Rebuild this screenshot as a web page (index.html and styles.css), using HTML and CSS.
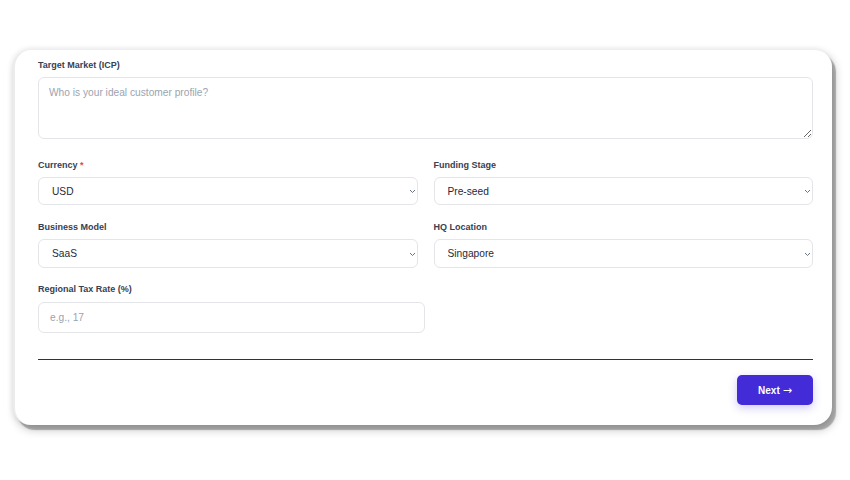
FILE: index.html
```html
<!DOCTYPE html>
<html>
<head>
<meta charset="utf-8">
<link rel="stylesheet" href="styles.css">
</head>
<body>
<div class="card">
  <div class="field first">
    <label class="label">Target Market (ICP)</label>
    <textarea class="textarea" placeholder="Who is your ideal customer profile?"></textarea>
  </div>
  <div class="row">
    <div class="field">
      <label class="label">Currency <span class="req">*</span></label>
      <div class="select-wrap">
        <select class="select"><option>USD</option></select>
        <svg class="chev" width="7" height="5" viewBox="0 0 7 5"><path d="M1 1l2.5 2.5L6 1" fill="none" stroke="#6b7280" stroke-width="1"/></svg>
      </div>
    </div>
    <div class="field">
      <label class="label">Funding Stage</label>
      <div class="select-wrap">
        <select class="select"><option>Pre-seed</option></select>
        <svg class="chev" width="7" height="5" viewBox="0 0 7 5"><path d="M1 1l2.5 2.5L6 1" fill="none" stroke="#6b7280" stroke-width="1"/></svg>
      </div>
    </div>
  </div>
  <div class="row row2">
    <div class="field">
      <label class="label">Business Model</label>
      <div class="select-wrap">
        <select class="select tall"><option>SaaS</option></select>
        <svg class="chev" width="7" height="5" viewBox="0 0 7 5"><path d="M1 1l2.5 2.5L6 1" fill="none" stroke="#6b7280" stroke-width="1"/></svg>
      </div>
    </div>
    <div class="field">
      <label class="label">HQ Location</label>
      <div class="select-wrap">
        <select class="select tall"><option>Singapore</option></select>
        <svg class="chev" width="7" height="5" viewBox="0 0 7 5"><path d="M1 1l2.5 2.5L6 1" fill="none" stroke="#6b7280" stroke-width="1"/></svg>
      </div>
    </div>
  </div>
  <div class="field tax">
    <label class="label">Regional Tax Rate (%)</label>
    <input class="input" type="text" placeholder="e.g., 17">
  </div>
  <div class="divider"></div>
  <div class="actions">
    <button class="btn">Next <span class="arrow">→</span></button>
  </div>
</div>
</body>
</html>
```
FILE: styles.css
```css
* { box-sizing: border-box; }
html { margin: 0; padding: 0; background: #ffffff; height: 100%; }
body {
  margin: 0;
  min-height: 480px;
  font-family: "Liberation Sans", Arial, sans-serif;
  padding: 49px 0 40px 13px;
  background: #ffffff;
}
.card {
  width: 819px;
  height: 376px;
  background: #fff;
  border-radius: 18px;
  border-left: 2px solid #ececec;
  border-top: 1px solid #efefef;
  box-shadow: 4px 5px 1px rgba(0,0,0,0.27), 3px 5px 10px rgba(0,0,0,0.22), -1px 0 6px rgba(0,0,0,0.08);
  padding: 9px 19px 0 23px;
}
.field { display: flex; flex-direction: column; }
.label {
  font-size: 9px;
  line-height: 12px;
  font-weight: bold;
  color: #374151;
  margin-bottom: 6px;
}
.req { color: #ef4444; }
.textarea {
  height: 62px;
  width: 100%;
  border: 1px solid #e3e5e8;
  border-radius: 6px;
  padding: 9px 10px;
  font-family: "Liberation Sans", Arial, sans-serif;
  font-size: 10.2px;
  color: #111827;
  resize: vertical;
  outline: none;
}
.textarea::placeholder, .input::placeholder { color: #9ca3af; }
.row {
  display: grid;
  grid-template-columns: 1fr 1fr;
  column-gap: 16px;
  margin-top: 20px;
}
.row2 { margin-top: 16px; }
.select-wrap { position: relative; }
.select {
  appearance: none;
  -webkit-appearance: none;
  width: 100%;
  height: 28px;
  border: 1px solid #e3e5e8;
  border-radius: 6px;
  background: #fff;
  padding: 0 13px;
  font-family: "Liberation Sans", Arial, sans-serif;
  font-size: 10.2px;
  color: #1f2937;
  outline: none;
}
.select.tall { height: 29px; }
.chev {
  position: absolute;
  right: 2px;
  top: 50%;
  margin-top: -2px;
}
.tax { margin-top: 15px; width: 387px; }
.tax .label { margin-bottom: 7px; }
.input {
  height: 31px;
  width: 100%;
  border: 1px solid #e3e5e8;
  border-radius: 6px;
  padding: 0 11px;
  font-family: "Liberation Sans", Arial, sans-serif;
  font-size: 10.2px;
  color: #1f2937;
  outline: none;
}
.divider {
  margin-top: 26px;
  height: 1px;
  background: #333;
}
.actions {
  display: flex;
  justify-content: flex-end;
  margin-top: 15px;
}
.btn {
  width: 76px;
  height: 30px;
  border: none;
  border-radius: 5px;
  background: #432cd8;
  color: #fff;
  font-family: "Liberation Sans", Arial, sans-serif;
  font-size: 10px;
  font-weight: bold;
  box-shadow: 0 3px 8px rgba(67,44,216,0.25);
  display: flex;
  align-items: center;
  justify-content: center;
  gap: 3px;
}
.arrow {
  font-family: "DejaVu Sans", sans-serif;
  font-weight: normal;
  font-size: 11px;
  line-height: 1;
}
```
